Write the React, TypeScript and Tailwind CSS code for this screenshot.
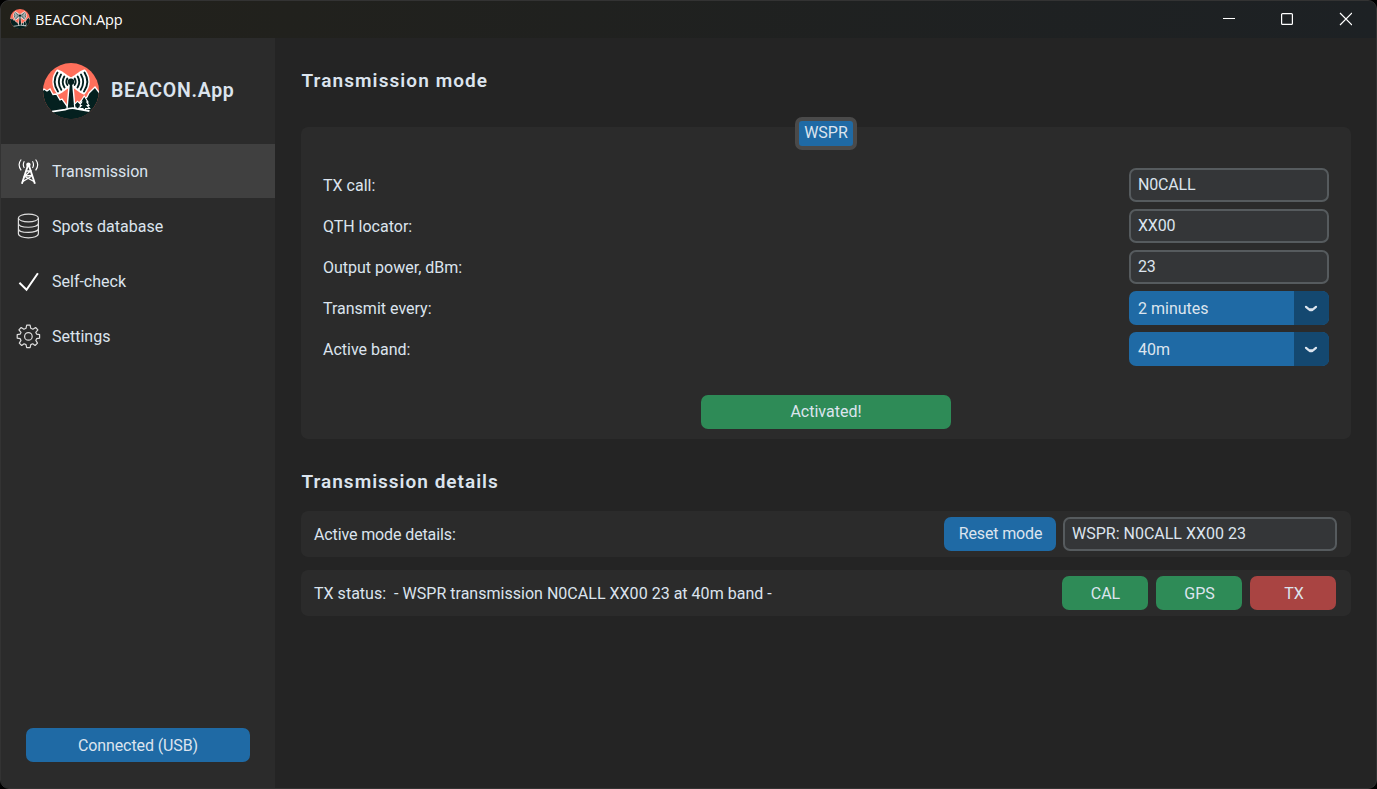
import { useId, useState, type ReactNode } from "react";

function Logo({ className }: { className: string }) {
  const clip = useId();
  return (
    <svg viewBox="0 0 56 56" className={className}>
      <clipPath id={clip}>
        <circle cx="28" cy="28" r="28" />
      </clipPath>
      <g clipPath={`url(#${clip})`}>
        <rect width="56" height="56" fill="#ff6f5b" />
        <path
          d="M-2 29L1 26L4 28L7 26L10 31.500L13.500 31L17 37L19 36L24 43H33L38 38L44 34L46 30L52 24L58 32V58H-2Z"
          fill="#04201f"
          stroke="#fff"
          strokeWidth="1.3"
        />
        <path
          d="M14.500 7.500C8.800 14 8.800 23 15 30.500L19 28.500L24 25L28 22L32 25L37 28.500L41 30.500C47.200 23 47.200 14 41.500 7.500L37 9.500L32 13L28 15.500L24 13L19 9.500Z"
          fill="#fff"
          stroke="#fff"
          strokeWidth="2"
          strokeLinejoin="round"
        />
        <g fill="none" stroke="#04201f" strokeWidth="1.900" strokeLinecap="round">
          <path d="M14.500 9.500Q8.500 19 15 28.500M18 11.500Q13.500 19 18.300 26.800M21.300 13.500Q18 19 21.500 24.500M24.300 15.500Q22.300 19 24.500 22" />
          <path d="M41.500 9.500Q47.500 19 41 28.500M38 11.500Q42.500 19 37.700 26.800M34.700 13.500Q38 19 34.500 24.500M31.700 15.500Q33.700 19 31.500 22" />
        </g>
        <path d="M27 20H29L31.300 46H24.700Z" fill="#04201f" stroke="#fff" strokeWidth="2.800" paintOrder="stroke" />
        <circle cx="28" cy="18.800" r="3.200" fill="#04201f" />
        <path
          d="M41.200 34L44 38.500H42.800L45 42H43L45.500 45H42V47.500H40.500V45H37L39.500 42H37.500L39.700 38.500H38.500ZM34.500 39L37 41.500L36.300 44.500H35.200V46H33.800V44.500H32.700L32 41.500Z"
          fill="#04201f"
          stroke="#fff"
          strokeWidth="2.200"
          paintOrder="stroke"
        />
        <path d="M8 48.800L22 46.200Q29 43.500 34 46L47 48.200L52 58H4Z" fill="#04201f" />
        <path d="M9 48.600L22 46.600Q29 44 34 45.800L46.500 48" fill="none" stroke="#fff" strokeWidth="1.800" />
      </g>
    </svg>
  );
}

function TowerIcon() {
  return (
    <svg viewBox="0 0 24 28" className="h-7 w-6" fill="none" stroke="#fff">
      <circle cx="12.400" cy="7.800" r="2.200" fill="#fff" stroke="none" />
      <path d="M11.700 9L5.900 26.800M13.100 9L18.900 26.800" strokeWidth="1.900" />
      <path d="M10.400 14H14.400L8.900 19L16.400 18.500M8.900 19.500L17.900 24.500M15.900 19L6.900 24.500" strokeWidth="1.300" />
      <path
        d="M8.300 4.300Q6.300 7.800 8.300 11M5.200 2.500Q1 7.500 5.200 13.300M16.500 4.300Q18.500 7.800 16.500 11M19.600 2.500Q23.800 7.500 19.600 13.300"
        strokeWidth="1.150"
      />
    </svg>
  );
}

function DatabaseIcon() {
  return (
    <svg viewBox="0 0 24 26" className="h-[26px] w-6" fill="none" stroke="#dedede" strokeWidth="1.200">
      <ellipse cx="12.400" cy="5" rx="10" ry="3.900" />
      <path d="M2.400 5V20.500C2.400 26.200 22.400 26.200 22.400 20.500V5M2.400 10.200C2.400 15.600 22.400 15.600 22.400 10.200M2.400 15.400C2.400 20.800 22.400 20.800 22.400 15.400" />
    </svg>
  );
}

function CheckIcon() {
  return (
    <svg viewBox="0 0 24 24" className="size-6" fill="none" stroke="#fff" strokeWidth="2">
      <path d="M3.400 13.700L10.500 20.700L21.900 4.200" />
    </svg>
  );
}

function GearIcon() {
  return (
    <svg viewBox="-.4 -.4 24 24" className="size-6 overflow-visible" fill="none" stroke="#dedede" strokeWidth="1.200" strokeLinejoin="round">
      <circle cx="12" cy="12" r="3.800" />
      <path d="M10.300 .8H13.700L14.400 3.900L16.500 4.800L19.200 3.100L21.500 5.400L19.400 8L20.200 9.700L23.200 10.300V13.700L20.200 14.300L19.400 16L21.100 18.700L18.700 21.100L16.300 19.400L14.400 20.200L13.700 23.200H10.300L9.600 20.200L7.700 19.400L5.300 21.100L2.900 18.700L4.600 16L3.800 14.300L.8 13.700V10.300L3.800 9.700L4.600 8L2.500 5.400L4.800 3.100L7.500 4.800L9.600 3.900Z" />
    </svg>
  );
}

const navItems: { label: string; icon: ReactNode }[] = [
  { label: "Transmission", icon: <TowerIcon /> },
  { label: "Spots database", icon: <DatabaseIcon /> },
  { label: "Self-check", icon: <CheckIcon /> },
  { label: "Settings", icon: <GearIcon /> },
];

function Field({ label, children }: { label: string; children: ReactNode }) {
  return (
    <div className="flex h-[34px] items-center justify-between">
      <span className="pt-px">{label}</span>
      {children}
    </div>
  );
}

function Entry({ value }: { value: string }) {
  return (
    <div className="flex h-[34px] w-[200px] items-center rounded-[7px] border-2 border-[#565b5e] bg-[#343638] px-[7px] pb-px tracking-[-0.200px]">
      {value}
    </div>
  );
}

function Select({ value }: { value: string }) {
  return (
    <button className="flex h-[34px] w-[200px] overflow-hidden rounded-[7px] bg-[#1f6aa5] text-left">
      <span className="flex h-full flex-1 items-center pt-[2px] pl-[9px]">{value}</span>
      <span className="flex h-full w-[35px] items-center justify-center bg-[#144870] pt-px pr-px">
        <svg viewBox="0 0 14 8" className="h-2 w-3.5" fill="none" stroke="#dce4ee" strokeWidth="2.200" strokeLinecap="round" strokeLinejoin="round">
          <path d="M2 1.800L5 4.400H9L12 1.800M6 5.200H8" />
        </svg>
      </span>
    </button>
  );
}

export default function App() {
  const [active, setActive] = useState("Transmission");
  return (
    <div className="h-[789px] w-[1377px] bg-black font-['Roboto',sans-serif] text-base text-[#dce4ee]">
      <div className="flex h-full flex-col overflow-hidden rounded-[9px] border border-[#333333] bg-[#242424]">
        <header className="flex h-[37px] shrink-0 items-center bg-linear-to-r from-[#22211b] to-[#1d2124] pl-[9px] text-white">
          <Logo className="mb-px size-5" />
          <span className="ml-[5px] font-['Open_Sans',sans-serif] text-[14.500px] tracking-[-0.120px]">BEACON.App</span>
          <svg viewBox="0 0 130 14" className="mr-6 mb-[2px] ml-auto h-3.5 w-[130px]" fill="none" stroke="#fff" strokeWidth="1.200">
            <path d="M1 6.500H13" />
            <rect x="59.600" y="1.600" width="10.800" height="10.800" rx="1" />
            <path d="M118 1L130 13M130 1L118 13" />
          </svg>
        </header>

        <div className="flex min-h-0 flex-1">
          <aside className="flex w-[274px] flex-col bg-[#2b2b2b]">
            <div className="flex h-[106px] items-center pl-[42px]">
              <Logo className="size-14" />
              <span className="ml-3 text-[19.500px] leading-[30px] font-semibold tracking-[0.700px]">BEACON.App</span>
            </div>
            <nav className="flex flex-col gap-px">
              {navItems.map((item) => (
                <button
                  key={item.label}
                  onClick={() => setActive(item.label)}
                  className={`flex h-[54px] items-center gap-3 pl-[15px] ${active === item.label ? "bg-[#404040]" : ""}`}
                >
                  {item.icon}
                  <span className="pt-[2px]">{item.label}</span>
                </button>
              ))}
            </nav>
            <button className="mx-[25px] mt-auto mb-[26px] h-[34px] rounded-[7px] bg-[#1f6aa5] pt-px tracking-[-0.100px]">Connected (USB)</button>
          </aside>

          <main className="flex flex-1 flex-col pr-[25px] pl-[26px]">
            <h1 className="mt-[28px] pl-[0.500px] text-[19px] leading-[30px] font-semibold tracking-[1.080px]">Transmission mode</h1>
            <section className="mt-[31px] flex h-[312px] flex-col items-center rounded-[7px] bg-[#2b2b2b] px-[22px]">
              <button className="-mt-[10px] h-[33px] w-[62px] shrink-0 rounded-[7px] border-4 border-[#4a4a4a] bg-[#1f6aa5] pb-[2px] leading-[23px]">
                WSPR
              </button>
              <div className="mt-[18px] flex w-full flex-col gap-[7px]">
                <Field label="TX call:"><Entry value="N0CALL" /></Field>
                <Field label="QTH locator:"><Entry value="XX00" /></Field>
                <Field label="Output power, dBm:"><Entry value="23" /></Field>
                <Field label="Transmit every:"><Select value="2 minutes" /></Field>
                <Field label="Active band:"><Select value="40m" /></Field>
              </div>
              <button className="mt-[29px] h-[34px] w-[250px] rounded-[7px] bg-[#2e8b57] pb-px">Activated!</button>
            </section>

            <h2 className="mt-[28px] pl-[0.500px] text-[19px] leading-[30px] font-semibold tracking-[1px]">Transmission details</h2>
            <section className="mt-[14px] flex h-[46px] items-center rounded-[7px] bg-[#2b2b2b] pr-[14px] pl-[13px]">
              <span className="pt-[2px] tracking-[-0.120px]">Active mode details:</span>
              <button className="mr-[7px] ml-auto h-[34px] w-28 rounded-[7px] bg-[#1f6aa5] pb-px pl-px tracking-[-0.150px]">Reset mode</button>
              <div className="flex h-[34px] w-[274px] items-center rounded-[7px] border-2 border-[#565b5e] bg-[#343638] px-[7px] pb-px">
                WSPR: N0CALL XX00 23
              </div>
            </section>
            <section className="mt-[13px] flex h-[46px] items-center gap-2 rounded-[7px] bg-[#2b2b2b] pr-[15px] pl-[13px]">
              <span className="mr-auto pt-[2px] tracking-[0.020px] whitespace-pre">TX status:  - WSPR transmission N0CALL XX00 23 at 40m band -</span>
              <button className="h-[34px] w-[86px] rounded-[7px] bg-[#2e8b57] pt-px pl-px">CAL</button>
              <button className="h-[34px] w-[86px] rounded-[7px] bg-[#2e8b57] pt-px pl-px">GPS</button>
              <button className="h-[34px] w-[86px] rounded-[7px] bg-[#a94442] pt-px pl-[2px]">TX</button>
            </section>
          </main>
        </div>
      </div>
    </div>
  );
}
